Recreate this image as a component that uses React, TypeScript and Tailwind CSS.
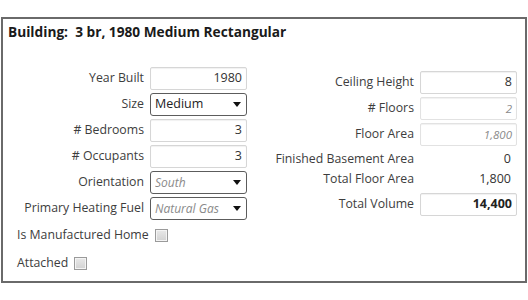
import React from "react";

const font = { fontFamily: '"Open Sans", "Liberation Sans", sans-serif' };

function TextBox({ value, muted, bold }: { value: string; muted?: boolean; bold?: boolean }) {
  return (
    <div
      className={
        "flex h-[23px] w-[97px] items-center justify-end rounded-[2px] border bg-white pr-[4px] shadow-[inset_0_1px_1px_rgba(0,0,0,0.06)] " +
        (muted ? "border-[#e2e2e2]" : "border-[#d6d6d6]")
      }
    >
      <span
        className={
          muted
            ? "text-[11.5px] italic text-[#8a8a8a]"
            : bold
              ? "text-[12.5px] font-bold text-[#222]"
              : "text-[12.5px] text-[#333]"
        }
      >
        {value}
      </span>
    </div>
  );
}

function SelectBox({ value, muted }: { value: string; muted?: boolean }) {
  return (
    <div className="flex h-[23px] w-[97px] items-center justify-between rounded-[3px] border border-[#5c5c5c] bg-white pl-[4px] pr-[5px]">
      <span
        className={
          "overflow-hidden whitespace-nowrap " +
          (muted ? "w-[72px] text-[12px] italic text-[#8a8a8a]" : "text-[12.5px] text-[#222]")
        }
      >
        {value}
      </span>
      <svg width="8" height="5" viewBox="0 0 8 5" className="shrink-0">
        <path d="M0 0h8L4 5z" fill="#111" />
      </svg>
    </div>
  );
}

function Checkbox() {
  return (
    <span className="ml-[6px] inline-block h-[13px] w-[13px] border border-[#9a9a9a] bg-gradient-to-b from-[#e9e9e9] to-[#d2d2d2] shadow-[inset_0_0_0_1px_#f4f4f4]" />
  );
}

function Row({ label, labelWidth, children, className }: { label: string; labelWidth: string; children: React.ReactNode; className?: string }) {
  return (
    <div className={"flex items-center " + (className ?? "")}>
      <span className={labelWidth + " whitespace-nowrap text-right text-[12.3px] text-[#3d3d3d]"}>{label}</span>
      <div className="ml-[6px]">{children}</div>
    </div>
  );
}

export default function App() {
  return (
    <div className="h-[300px] w-[528px] bg-white pl-[1px] pt-[17px]" style={font}>
      <div className="h-[266px] w-[526px] border-2 border-[#6a6a6a] bg-white">
        <div className="pl-[5px] pt-[3px] text-[13.7px] font-bold leading-[19px] text-[#1a1a1a]">
          Building:&nbsp; 3 br, 1980 Medium Rectangular
        </div>

        <div className="mt-[26px] flex pl-[5px]">
          <div className="flex w-[239px] flex-col">
            <Row label="Year Built" labelWidth="w-[136px]">
              <TextBox value="1980" />
            </Row>
            <Row label="Size" labelWidth="w-[136px]" className="mt-[3px]">
              <SelectBox value="Medium" />
            </Row>
            <Row label="# Bedrooms" labelWidth="w-[136px]" className="mt-[3px]">
              <TextBox value="3" />
            </Row>
            <Row label="# Occupants" labelWidth="w-[136px]" className="mt-[3px]">
              <TextBox value="3" />
            </Row>
            <Row label="Orientation" labelWidth="w-[136px]" className="mt-[3px]">
              <SelectBox value="South" muted />
            </Row>
            <Row label="Primary Heating Fuel" labelWidth="w-[136px]" className="mt-[3px]">
              <SelectBox value="Natural Gas" muted />
            </Row>
            <div className="mt-[3px] flex h-[24px] items-center pl-[9px] text-[12.3px] text-[#3d3d3d]">
              Is Manufactured Home
              <Checkbox />
            </div>
            <div className="mt-[4px] flex h-[24px] items-center pl-[9px] text-[12.3px] text-[#3d3d3d]">
              Attached
              <Checkbox />
            </div>
          </div>

          <div className="ml-[22px] mt-[4px] flex flex-col">
            <Row label="Ceiling Height" labelWidth="w-[145px]">
              <TextBox value="8" />
            </Row>
            <Row label="# Floors" labelWidth="w-[145px]" className="mt-[3px]">
              <TextBox value="2" muted />
            </Row>
            <Row label="Floor Area" labelWidth="w-[145px]" className="mt-[3px]">
              <TextBox value="1,800" muted />
            </Row>
            <Row label="Finished Basement Area" labelWidth="w-[145px]" className="mt-[3px] h-[20px]">
              <div className="w-[97px] pr-[6px] text-right text-[12.5px] text-[#333]">0</div>
            </Row>
            <Row label="Total Floor Area" labelWidth="w-[145px]" className="h-[20px]">
              <div className="w-[97px] pr-[6px] text-right text-[12.5px] text-[#333]">1,800</div>
            </Row>
            <Row label="Total Volume" labelWidth="w-[145px]" className="mt-[4px]">
              <TextBox value="14,400" bold />
            </Row>
          </div>
        </div>
      </div>
    </div>
  );
}
